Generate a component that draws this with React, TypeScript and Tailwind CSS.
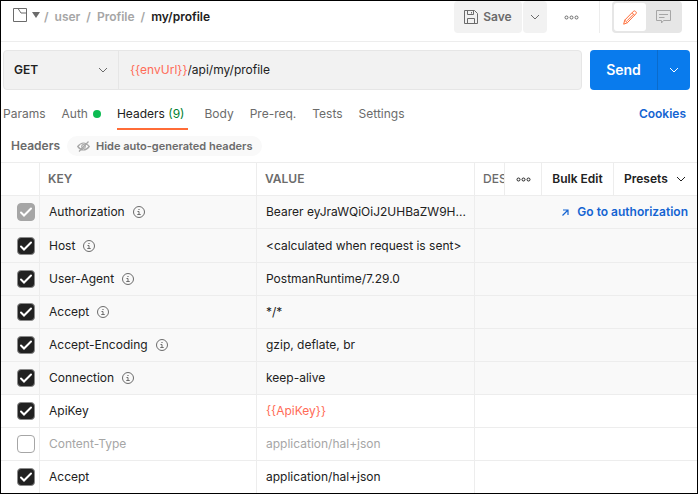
import React from "react";

type HeaderRow = {
  name: string;
  value: string;
  auto?: boolean;
  locked?: boolean;
  off?: boolean;
  token?: boolean;
};

const rows: HeaderRow[] = [
  { name: "Authorization", value: "Bearer eyJraWQiOiJ2UHBaZW9H...", auto: true, locked: true },
  { name: "Host", value: "<calculated when request is sent>", auto: true },
  { name: "User-Agent", value: "PostmanRuntime/7.29.0", auto: true },
  { name: "Accept", value: "*/*", auto: true },
  { name: "Accept-Encoding", value: "gzip, deflate, br", auto: true },
  { name: "Connection", value: "keep-alive", auto: true },
  { name: "ApiKey", value: "{{ApiKey}}", token: true },
  { name: "Content-Type", value: "application/hal+json", off: true },
  { name: "Accept", value: "application/hal+json" },
];

function Chevron({ className = "" }: { className?: string }) {
  return (
    <svg className={className} width="10" height="6" viewBox="0 0 10 6" fill="none" stroke="currentColor" aria-hidden="true">
      <path d="M1 1l4 4 4-4" />
    </svg>
  );
}

function Dots() {
  return (
    <svg width="15" height="5" viewBox="0 0 15 5" fill="none" stroke="currentColor" aria-hidden="true">
      <circle cx="2.5" cy="2.5" r="1.5" />
      <circle cx="7.5" cy="2.5" r="1.5" />
      <circle cx="12.5" cy="2.5" r="1.5" />
    </svg>
  );
}

function InfoIcon() {
  return (
    <svg width="12" height="12" viewBox="0 0 12 12" fill="none" stroke="#6b6b6b" aria-hidden="true">
      <circle cx="6" cy="6" r="5.5" />
      <path d="M4.5 5.5H6V8.5M4.3 8.5h3.4M5.4 3.5h1.2" />
    </svg>
  );
}

function TopBar() {
  return (
    <header className="flex h-[41px] items-start border-b border-[#ededed] pl-3">
      <div className="flex h-8 flex-1 items-center">
        <button type="button" aria-label="Save location" className="flex items-center gap-1">
          <svg width="15" height="15" viewBox="0 0 15 15" fill="none" stroke="#6b6b6b" className="mb-1">
            <path d="M.5.5h13v13H.5zM5 .5l3 4.500h5.500" />
          </svg>
          <svg width="8" height="6" viewBox="0 0 8 6" fill="#6b6b6b" className="mb-1">
            <path d="M0 0h8L4 6z" />
          </svg>
        </button>
        <nav aria-label="Breadcrumb" className="ml-1 flex gap-[6px] font-semibold text-[#a6a6a6]">
          <span>/</span>
          <a href="#user">user</a>
          <span>/</span>
          <a href="#profile">Profile</a>
          <span>/</span>
          <span className="text-[#212121]">my/profile</span>
        </nav>
      </div>
      <div className="flex h-8 items-center">
        <button type="button" className="flex h-8 w-[68px] items-center justify-center gap-[5px] rounded bg-[#f2f2f2] font-semibold text-[#6b6b6b]">
          <svg width="14" height="14" viewBox="0 0 14 14" fill="none" stroke="currentColor" aria-hidden="true">
            <path d="M.5.5h10l3 3v10H.5zM3.500.5v4h6v-4M3.500 13.500v-5h7v5M7.500 2v1.500" />
          </svg>
          Save
        </button>
        <button type="button" aria-label="Save options" className="ml-px flex h-8 w-6 items-center justify-center rounded bg-[#f2f2f2] text-[#6b6b6b]">
          <Chevron />
        </button>
        <button type="button" aria-label="More actions" className="flex h-8 w-12 items-center justify-center text-[#6b6b6b]">
          <Dots />
        </button>
        <div className="ml-1 h-8 border-l border-[#ededed]" />
        <div className="mr-[15px] ml-3 flex h-8 w-[70px] rounded bg-[#e6e6e6] p-[2px]">
          <button type="button" aria-label="Build" className="flex w-8 items-center justify-center rounded-[3px] bg-white">
            <svg width="14" height="15" viewBox="0 0 14 15" fill="none" stroke="#ff6c37" aria-hidden="true">
              <path d="M.7 14.200l1-4L10.300 1.400q1-1 2.200 0l.4.400q1 1 0 2L4.400 12.700zM1.700 10.200l2.700 2.500M9 2.700l2.700 2.600M10.500 4.200L4 10.800" />
            </svg>
          </button>
          <button type="button" aria-label="Comments" className="flex flex-1 items-center justify-center">
            <svg width="15" height="14" viewBox="0 0 15 14" fill="none" stroke="#a6a6a6" aria-hidden="true">
              <path d="M.5.5h14v10H7.500L5.500 13v-2.500h-5zM3 4.500h9M3 7.500h5.500" />
            </svg>
          </button>
        </div>
      </div>
    </header>
  );
}

function RequestBar() {
  return (
    <form className="flex h-10 gap-2 pr-[7px] pl-[2px]" onSubmit={(e) => e.preventDefault()}>
      <div className="flex min-w-0 flex-1 rounded border border-[#e6e6e6] bg-[#f2f2f2]">
        <div className="grid w-[115px] items-center border-r border-[#e6e6e6]">
          <select aria-label="Method" defaultValue="GET" className="col-start-1 row-start-1 h-full appearance-none bg-transparent pl-[10px] font-semibold text-[#212121] outline-none">
            <option>GET</option>
            <option>POST</option>
            <option>PUT</option>
          </select>
          <Chevron className="pointer-events-none col-start-1 row-start-1 mr-[10px] justify-self-end text-[#6b6b6b]" />
        </div>
        <label className="flex min-w-0 flex-1 items-center pl-[11px]">
          <span className="text-[#ff6b57]">{"{{envUrl}}"}</span>
          <input type="text" aria-label="Request URL" defaultValue="/api/my/profile" className="min-w-0 flex-1 bg-transparent text-[#212121] outline-none" />
        </label>
      </div>
      <div className="flex w-[100px] overflow-hidden rounded bg-[#097bed] text-white">
        <button type="submit" className="flex-1 text-sm font-semibold">Send</button>
        <button type="button" aria-label="Send options" className="flex w-[33px] items-center justify-center border-l border-[#0a6bcc]">
          <Chevron />
        </button>
      </div>
    </form>
  );
}

function Tabs() {
  return (
    <div className="flex h-8 justify-between pr-[11px] pl-[2px]">
      <div role="tablist" className="flex gap-4 text-[#6b6b6b]">
        <button type="button" role="tab">Params</button>
        <button type="button" role="tab" className="flex items-center gap-[5px]">
          Auth
          <span className="size-2 rounded-full bg-[#0cbb52]" />
        </button>
        <button type="button" role="tab" aria-selected="true" className="border-b-2 border-[#ff6c37] pt-[2px] pr-1 text-[#212121]">
          Headers <span className="text-[#007f31]">(9)</span>
        </button>
        <button type="button" role="tab">Body</button>
        <button type="button" role="tab">Pre-req.</button>
        <button type="button" role="tab">Tests</button>
        <button type="button" role="tab">Settings</button>
      </div>
      <a href="#cookies" className="self-center font-semibold text-[#1464d2]">Cookies</a>
    </div>
  );
}

function CheckBox({ row }: { row: HeaderRow }) {
  return (
    <div className="grid w-[18px]">
      <input
        type="checkbox"
        aria-label={`Include ${row.name}`}
        defaultChecked={!row.off}
        disabled={row.locked}
        className="peer col-start-1 row-start-1 size-[18px] appearance-none rounded border border-[#a6a6a6] bg-white checked:border-[#8a8a8a] checked:bg-[#212121] disabled:border-[#a6a6a6] disabled:bg-[#a6a6a6]"
      />
      <svg className="pointer-events-none invisible col-start-1 row-start-1 size-[18px] peer-checked:visible" viewBox="0 0 18 18" fill="none" stroke="#fff" strokeWidth="2" strokeLinecap="round" aria-hidden="true">
        <path d="M4 9.500l3 3 7-7" />
      </svg>
    </div>
  );
}

function HeadersTable() {
  return (
    <table className="w-full table-fixed border-separate border-spacing-0 border-t border-[#ededed] text-left">
      <colgroup>
        <col className="w-[39px]" />
        <col />
        <col className="w-[218px]" />
        <col className="w-[222px]" />
      </colgroup>
      <thead>
        <tr className="h-[33px] text-[#6b6b6b] *:border-b *:border-[#ededed] *:p-0 *:font-semibold">
          <th className="border-r" aria-label="Enabled" />
          <th className="border-r"><span className="pl-2">KEY</span></th>
          <th className="border-r"><span className="pl-2">VALUE</span></th>
          <th>
            <div className="flex h-8 text-[#212121]">
              <div className="flex min-w-0 flex-1 items-center pl-2 font-medium text-[#6b6b6b]">DES</div>
              <button type="button" aria-label="Columns" className="flex w-[37px] items-center justify-center border-l border-[#ededed] bg-white">
                <Dots />
              </button>
              <button type="button" className="w-[72px] border-l border-[#ededed]">Bulk Edit</button>
              <button type="button" className="flex w-[84px] items-center gap-2 border-l border-[#ededed] pl-[10px]">
                Presets
                <Chevron />
              </button>
            </div>
          </th>
        </tr>
      </thead>
      <tbody>
        {rows.map((row, i) => (
          <tr
            key={i}
            className={`h-[33px] nth-2:h-[34px] *:border-b *:border-[#ededed] *:p-0 ${row.auto ? "bg-[#f9f9f9]" : "bg-white"} ${row.off ? "text-[#a6a6a6]" : "text-[#212121]"}`}
          >
            <td className="border-r">
              <div className="pl-4"><CheckBox row={row} /></div>
            </td>
            <td className="border-r">
              <div className="flex items-center gap-2 pl-[9px]">
                {row.name}
                {row.auto && <InfoIcon />}
              </div>
            </td>
            <td className="border-r">
              <div className={`pl-[9px] whitespace-nowrap ${row.token ? "text-[#ff6b57]" : ""}`}>{row.value}</div>
            </td>
            <td>
              {row.locked && (
                <a href="#authorization" className="flex items-center justify-end gap-2 pr-[9px] font-semibold text-[#1464d2]">
                  <svg width="7" height="7" viewBox="0 0 7 7" fill="none" stroke="currentColor" strokeWidth="1.2" aria-hidden="true">
                    <path d="M.5 6.500L6 1M1 1h5v5" />
                  </svg>
                  Go to authorization
                </a>
              )}
            </td>
          </tr>
        ))}
      </tbody>
    </table>
  );
}

export default function App() {
  return (
    <main className="h-screen overflow-hidden border border-black bg-white font-['Inter','Liberation_Sans',sans-serif] text-xs text-[#212121]">
      <TopBar />
      <div className="pt-2">
        <RequestBar />
      </div>
      <div className="pt-2">
        <Tabs />
      </div>
      <div className="flex h-8 items-center gap-[7px] pl-[10px] font-semibold text-[#6b6b6b]">
        <span>Headers</span>
        <button type="button" className="flex h-5 items-center gap-[6px] rounded-full bg-[#f9f9f9] px-[10px] text-[11px]">
          <svg width="13" height="11" viewBox="0 0 13 11" fill="none" stroke="#a6a6a6" strokeWidth="1.200" aria-hidden="true">
            <path d="M.7 5.500Q6.500-1.500 12.300 5.500Q6.500 12.500.7 5.500zM11.500.5L2 10.500" />
            <circle cx="6.500" cy="5.500" r="1.800" />
          </svg>
          Hide auto-generated headers
        </button>
      </div>
      <HeadersTable />
    </main>
  );
}
